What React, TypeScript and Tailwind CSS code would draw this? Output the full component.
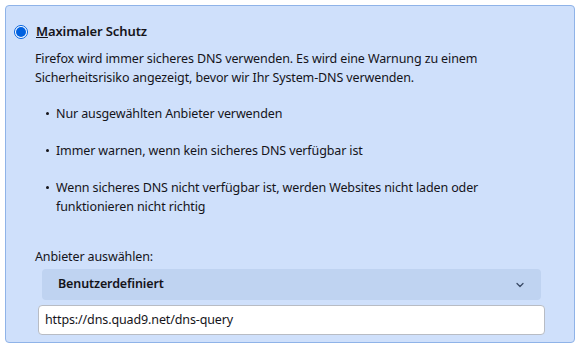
import { ChevronDown } from "lucide-react";

const bullets = [
  "Nur ausgewählten Anbieter verwenden",
  "Immer warnen, wenn kein sicheres DNS verfügbar ist",
  "Wenn sicheres DNS nicht verfügbar ist, werden Websites nicht laden oder funktionieren nicht richtig",
];

export default function App() {
  return (
    <div className="w-[580px] h-[347px] bg-white p-[5px] pb-[4px] font-['Noto_Sans',sans-serif] text-[12.5px] tracking-[-0.12px] text-[#15141a]">
      <div className="h-full rounded-[4px] border border-[#8fb3e8] bg-[#cfe0fb] pl-[8px] pr-[29px] pt-[16px]">
        {/* Radio + label */}
        <label className="flex items-center gap-[8px]">
          <span className="flex h-[14px] w-[14px] items-center justify-center rounded-full border border-[#0061e0] bg-white">
            <span className="h-[10px] w-[10px] rounded-full bg-[#0061e0]" />
          </span>
          <span className="text-[13px] font-semibold leading-[19px]">
            <span className="underline">M</span>aximaler Schutz
          </span>
        </label>

        <div className="pl-[21px]">
          <p className="mt-[8px] leading-[19px]">
            Firefox wird immer sicheres DNS verwenden. Es wird eine Warnung zu einem Sicherheitsrisiko angezeigt, bevor wir Ihr System-DNS verwenden.
          </p>

          <ul className="mt-[17px] flex flex-col gap-[18px] pl-[11px] pr-[40px]">
            {bullets.map((b) => (
              <li key={b} className="flex leading-[19px]">
                <span className="flex h-[19px] w-[10px] shrink-0 items-center">
                  <span className="h-[3px] w-[3px] rounded-full bg-[#15141a]" />
                </span>
                <span>{b}</span>
              </li>
            ))}
          </ul>

          <div className="mt-[31px] leading-[19px]">Anbieter auswählen:</div>

          <div className="mt-[3px] ml-[7px] mr-[4px] flex h-[31px] items-center justify-between rounded-[4px] bg-[#bfd3f1] pl-[16px] pr-[15px] font-semibold">
            <span>Benutzerdefiniert</span>
            <ChevronDown size={12} strokeWidth={2.5} className="text-[#3a4a66]" />
          </div>

          <div className="mt-[5px] ml-[3px] flex h-[30px] items-center rounded-[4px] border border-[#b8bcc4] bg-white pl-[6px]">
            https://dns.quad9.net/dns-query
          </div>
        </div>
      </div>
    </div>
  );
}
